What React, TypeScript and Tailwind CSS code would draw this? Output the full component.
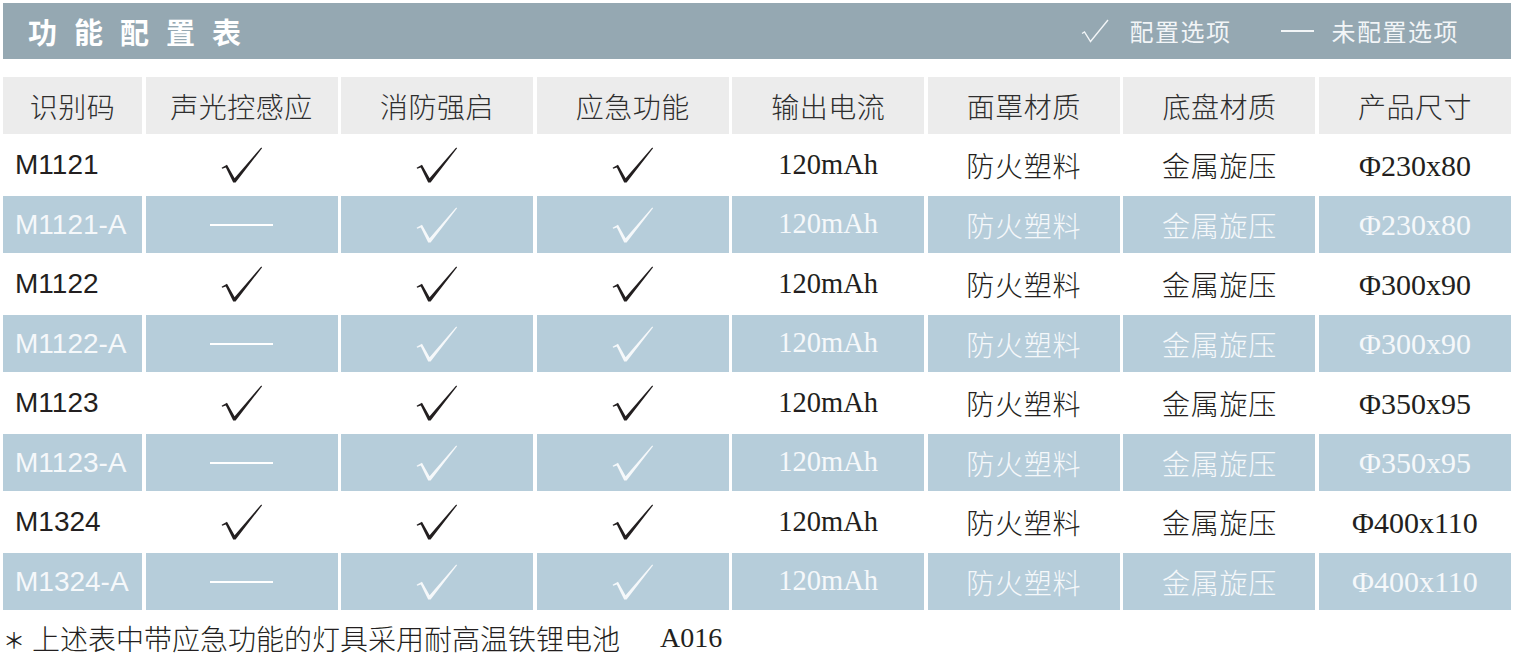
import React from 'react';

const CJK = "font-['Noto_Sans_CJK_SC',sans-serif]";
const SANS = "font-['Liberation_Sans','Noto_Sans_CJK_SC',sans-serif]";
const SERIF = "font-['Liberation_Serif','Noto_Sans_CJK_SC',serif]";

type Row = { model: string; sound: boolean; size: string };

const ROWS: Row[] = [
    { model: 'M1121', sound: true, size: 'Φ230x80' },
    { model: 'M1121-A', sound: false, size: 'Φ230x80' },
    { model: 'M1122', sound: true, size: 'Φ300x90' },
    { model: 'M1122-A', sound: false, size: 'Φ300x90' },
    { model: 'M1123', sound: true, size: 'Φ350x95' },
    { model: 'M1123-A', sound: false, size: 'Φ350x95' },
    { model: 'M1324', sound: true, size: 'Φ400x110' },
    { model: 'M1324-A', sound: false, size: 'Φ400x110' },
];

const HEADERS = ['识别码', '声光控感应', '消防强启', '应急功能', '输出电流', '面罩材质', '底盘材质', '产品尺寸'];

// serif-style tick: thick short stroke, thin long stroke
const Tick = () => (
    <svg width="42" height="36" viewBox="0 0 42 36" className="block">
        <path
            d="M0.6 20.8 L6 17.8 L13.6 31.2 L40.2 0.4 L41.1 1.2 L14.6 35.4 L12.2 35.4 L4.8 20.4 L1.2 21.8 Z"
            fill="currentColor"
        />
    </svg>
);

const LegendTick = () => (
    <svg width="28" height="24" viewBox="0 0 28 24" className="block">
        <path d="M1 14.5 L3.5 13 L9.5 22.5 L27 1" fill="none" stroke="currentColor" strokeWidth="1.4" />
    </svg>
);

const Cell = ({ blue, children, className }: { blue: boolean; children: React.ReactNode; className?: string }) => (
    <div
        className={
            'h-[57px] flex items-center ' +
            (blue ? 'bg-[#b6cdda] text-[#f5f8fa] ' : 'bg-white text-[#231f20] ') +
            (className ?? 'justify-center')
        }
    >
        {children}
    </div>
);

export default function App() {
    return (
        <div className="w-[1515px] h-[656px] bg-white pt-[3px] pl-[3px]">
            {/* title bar */}
            <div className="w-[1508px] h-[56px] bg-[#95a8b2] flex items-center justify-between pl-[25px] pr-[52px]">
                <div className={`${CJK} text-white text-[29px] font-bold tracking-[17px] leading-none`}>功能配置表</div>
                <div className={`${CJK} flex items-center text-[#f2f5f7] text-[24px] tracking-[1.5px] leading-none`}>
                    <LegendTick />
                    <span className="ml-[21px]">配置选项</span>
                    <span className="ml-[49px] w-[33px] h-[2px] bg-[#f2f5f7]" />
                    <span className="ml-[18px]">未配置选项</span>
                </div>
            </div>

            {/* table */}
            <div className="mt-[18px] w-[1508px] grid grid-cols-[139px_repeat(7,1fr)] gap-x-[3.5px] gap-y-[2.5px]">
                {HEADERS.map((h) => (
                    <div
                        key={h}
                        className={`${CJK} h-[57px] bg-[#ececec] flex items-center justify-center text-[28px] tracking-[0.5px] text-[#2e2e2e] font-light`}
                    >
                        {h}
                    </div>
                ))}
                {ROWS.map((r, i) => {
                    const blue = i % 2 === 1;
                    return (
                        <React.Fragment key={r.model}>
                            <Cell blue={blue} className={`${SANS} justify-start pl-[12px] text-[28px]`}>
                                {r.model}
                            </Cell>
                            <Cell blue={blue}>
                                {r.sound ? <Tick /> : <span className="w-[63px] h-[2px] bg-white" />}
                            </Cell>
                            <Cell blue={blue}>
                                <Tick />
                            </Cell>
                            <Cell blue={blue}>
                                <Tick />
                            </Cell>
                            <Cell blue={blue} className={`${SERIF} justify-center text-[28.5px]`}>
                                120mAh
                            </Cell>
                            <Cell blue={blue} className={`${CJK} justify-center text-[28px] tracking-[0.75px] font-light`}>
                                防火塑料
                            </Cell>
                            <Cell blue={blue} className={`${CJK} justify-center text-[28px] tracking-[0.75px] font-light`}>
                                金属旋压
                            </Cell>
                            <Cell blue={blue} className={`${SERIF} justify-center text-[30px]`}>
                                {r.size}
                            </Cell>
                        </React.Fragment>
                    );
                })}
            </div>

            {/* footnote */}
            <div className="mt-[13px] flex items-center text-[#231f20] leading-[30px]">
                <span className={`${CJK} text-[22px]`}>＊</span>
                <span className={`${CJK} ml-[7px] text-[28px] font-light`}>上述表中带应急功能的灯具采用耐高温铁锂电池</span>
                <span className={`${SERIF} ml-[40px] text-[28px]`}>A016</span>
            </div>
        </div>
    );
}
